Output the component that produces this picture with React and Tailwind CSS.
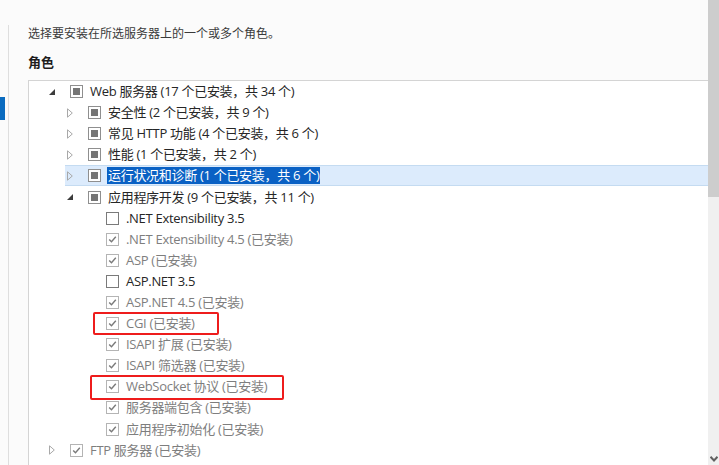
import React from "react";

const rows = [
  { level: 0, arrow: "open", box: "partial", label: "Web 服务器 (17 个已安装，共 34 个)" },
  { level: 1, arrow: "closed", box: "partial", label: "安全性 (2 个已安装，共 9 个)" },
  { level: 1, arrow: "closed", box: "partial", label: "常见 HTTP 功能 (4 个已安装，共 6 个)" },
  { level: 1, arrow: "closed", box: "partial", label: "性能 (1 个已安装，共 2 个)" },
  { level: 1, arrow: "closed", box: "partial", label: "运行状况和诊断 (1 个已安装，共 6 个)", selected: true },
  { level: 1, arrow: "open", box: "partial", label: "应用程序开发 (9 个已安装，共 11 个)" },
  { level: 2, box: "empty", label: ".NET Extensibility 3.5" },
  { level: 2, box: "done", label: ".NET Extensibility 4.5 (已安装)" },
  { level: 2, box: "done", label: "ASP (已安装)" },
  { level: 2, box: "empty", label: "ASP.NET 3.5" },
  { level: 2, box: "done", label: "ASP.NET 4.5 (已安装)" },
  { level: 2, box: "done", label: "CGI (已安装)" },
  { level: 2, box: "done", label: "ISAPI 扩展 (已安装)" },
  { level: 2, box: "done", label: "ISAPI 筛选器 (已安装)" },
  { level: 2, box: "done", label: "WebSocket 协议 (已安装)" },
  { level: 2, box: "done", label: "服务器端包含 (已安装)" },
  { level: 2, box: "done", label: "应用程序初始化 (已安装)" },
  { level: 0, arrow: "closed", box: "done", label: "FTP 服务器 (已安装)" },
  { level: 0, arrow: "closed", box: "done", label: "管理工具 (已安装)" },
];

function Arrow({ type }) {
  if (type === "open") {
    return (
      <svg width="6" height="6" viewBox="0 0 6 6">
        <path d="M6 0 L6 6 L0 6 Z" fill="#3c3c3c" />
      </svg>
    );
  }
  if (type === "closed") {
    return (
      <svg width="6" height="10" viewBox="0 0 6 10">
        <path d="M0.5 0.8 L5.3 5 L0.5 9.2 Z" fill="none" stroke="#a8a8a8" strokeWidth="1" />
      </svg>
    );
  }
  return null;
}

function Box({ type }) {
  if (type === "partial") {
    return (
      <div className="w-[13px] h-[13px] shrink-0 border border-[#8f8f8f] bg-white flex items-center justify-center">
        <div className="w-[7px] h-[7px] bg-[#767676]" />
      </div>
    );
  }
  if (type === "done") {
    return (
      <div className="w-[13px] h-[13px] shrink-0 border border-[#b4b4b4] bg-white">
        <svg width="11" height="11" viewBox="0 0 11 11">
          <path d="M2.2 5.4 L4.5 7.8 L8.8 2.8" fill="none" stroke="#7a7a7a" strokeWidth="1.4" />
        </svg>
      </div>
    );
  }
  return <div className="w-[13px] h-[13px] shrink-0 border border-[#7a7a7a] bg-white" />;
}

function Row({ row }) {
  const pad = row.level * 18;
  const gray = row.box === "done";
  return (
    <div
      className={
        "h-[21.1px] flex items-center " +
        (row.selected ? "bg-[#dcebfc] border-y border-[#c4dbf1] ml-[36px]" : "")
      }
    >
      <div
        className="flex items-center"
        style={{ marginLeft: row.selected ? pad - 36 : pad }}
      >
        <div className="w-[41px] shrink-0 flex items-center pl-[20px]">
          <Arrow type={row.arrow} />
        </div>
        <Box type={row.box} />
        <span
          className={
            "whitespace-nowrap leading-[17px] " +
            (row.selected
              ? "ml-[6px] bg-[#0a61c4] text-white px-[1px]"
              : gray
              ? "ml-[7px] text-[#7e7e7e]"
              : "ml-[7px] text-[#262626]")
          }
        >
          {row.label}
        </span>
      </div>
    </div>
  );
}

export default function App() {
  return (
    <div className="w-[719px] h-[465px] flex overflow-hidden bg-[#fbfbfb] text-[13px] tracking-[-0.3px] font-['Open_Sans','Noto_Sans_CJK_SC',sans-serif]">
      <div className="w-[708px] flex">
        <div className="w-[28px] shrink-0 flex">
          <div className="w-[5px] pt-[97px]">
            <div className="h-[23px] bg-[#0b6cc0]" />
          </div>
          <div className="ml-[3px] mt-[25px] border-l border-[#dedede]" />
        </div>
        <div className="flex-1 flex flex-col min-h-0">
          <p className="shrink-0 pt-[24px] h-[44px] text-[12px] tracking-normal leading-[18px] text-[#3a3a3a] font-['Noto_Sans_CJK_SC',sans-serif]">
            选择要安装在所选服务器上的一个或多个角色。
          </p>
          <h2 className="shrink-0 h-[36px] pt-[10px] text-[13px] tracking-normal leading-[16px] font-bold text-[#1e1e1e] font-['Noto_Sans_CJK_SC',sans-serif]">
            角色
          </h2>
          <div className="relative flex-1 min-h-0 overflow-hidden bg-white border-t border-l border-[#d4d4d4]">
            {rows.map((r, i) => (
              <Row key={i} row={r} />
            ))}
            <div className="absolute left-[64px] top-[231px] w-[126px] h-[23px] border-2 border-[#ee1c1c] rounded-[2px]" />
            <div className="absolute left-[61px] top-[294px] w-[194px] h-[25px] border-2 border-[#ee1c1c] rounded-[2px]" />
          </div>
        </div>
      </div>
      <div className="w-[11px] shrink-0 flex flex-col">
        <div className="h-[197px] bg-[#cdcdcd]" />
        <div className="flex-1 bg-[#f0f0f0] flex flex-col justify-end items-center pb-[3px]">
          <svg width="8" height="6" viewBox="0 0 8 6">
            <path d="M0.5 0.8 L4 4.5 L7.5 0.8" fill="none" stroke="#606060" strokeWidth="2" />
          </svg>
        </div>
      </div>
    </div>
  );
}
